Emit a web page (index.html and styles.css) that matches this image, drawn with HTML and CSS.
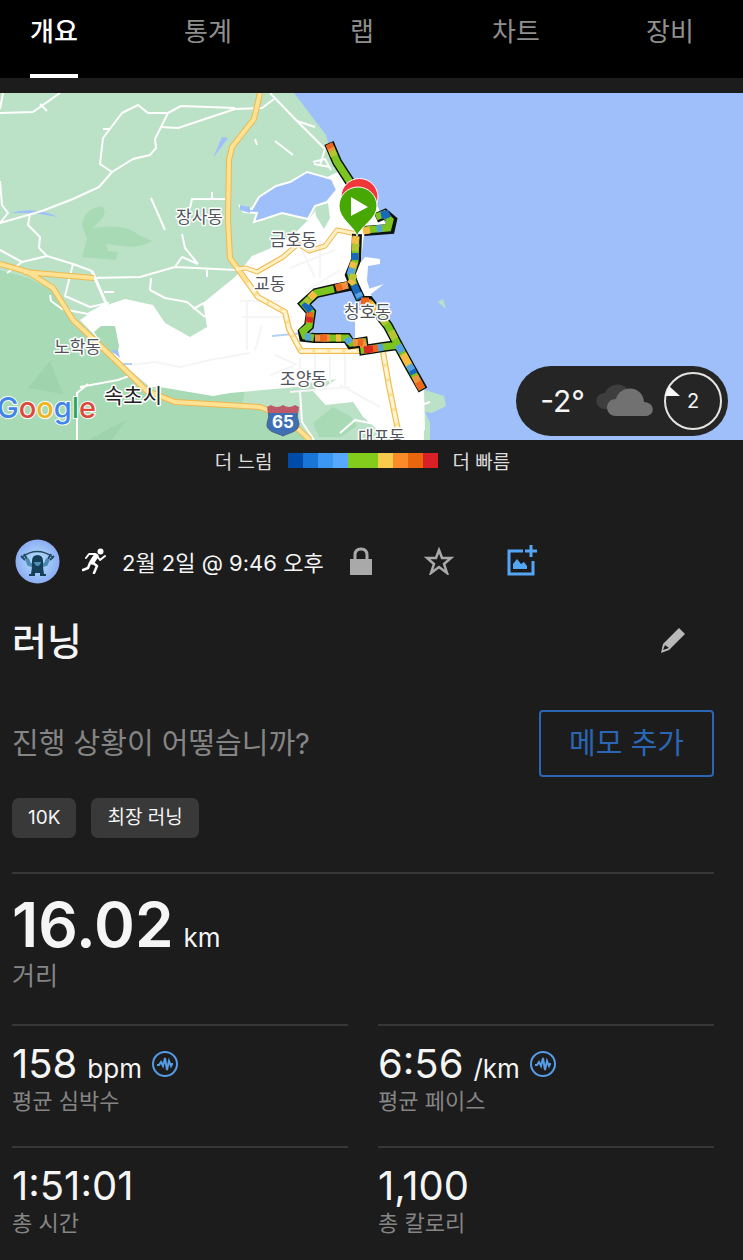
FILE: index.html
```html
<!DOCTYPE html>
<html lang="ko">
<head>
  <meta charset="UTF-8" />
  <meta name="viewport" content="width=device-width, initial-scale=1.0" />
  <title>러닝</title>
  <link rel="stylesheet" href="styles.css">
</head>
<body>
  <nav class="tabs">
    <a class="tab active" href="#overview">개요</a>
    <a class="tab" href="#stats">통계</a>
    <a class="tab" href="#laps">랩</a>
    <a class="tab" href="#charts">차트</a>
    <a class="tab" href="#gear">장비</a>
  </nav>

  <div class="map">
    <svg class="map-canvas" viewBox="0 93 743 347" role="img" aria-label="코스 지도">
      <rect y="93" width="743" height="347" fill="#9ebff9" />

      <!-- land -->
      <path fill="#bbe2c6" d="M0 93H294L307 110L326 135L329 146L352 180L377 205L388 230L364 234L361 260L372 298L382 312L402 344L425 390L444 396L446 406L432 413L425 412L430 422V440H0Z" />
      <path fill="#a8dab5" d="M0 270L28 278L53 290L73 322L110 358L150 390L175 402L230 406L280 410L312 440H0Z" />
      <path fill="#a8dab5" d="M82 225Q84 209 102 206Q108 213 100 221L92 228Q126 223 137 234L152 241Q137 249 123 246L106 244L108 251L118 252L116 260L82 257L87 239ZM160 387L213 396L245 390L235 440H175L150 398Z" />
      <path fill="#9fd3ad" d="M28 388L50 361L63 394ZM88 440L126 420L112 440Z" />
      <path fill="#fff" d="M80 320L98 308L125 299L153 305L165 323L190 337L207 327L203 303L235 277L252 256L283 243L297 225L308 220L320 205L331 195L325 178L338 172L352 181L377 205L388 230L364 234L361 260L372 298L382 312L402 344L423 389L424 440H397L381 433L363 417L353 402L330 410L312 390L337 379L297 387L230 393L213 396L160 387L150 387L132 372L110 351Z" />
      <path fill="#a8dab5" d="M94 332L101 326H115L119 346L117 355L106 350Z" />
      <path fill="#bbe2c6" d="M254 221L268 217L282 222L297 220L308 220L295 233L283 237L268 238ZM315 207L328 203L330 218L324 229L316 216ZM297 384L335 380L325 387L306 387ZM302 393L325 405L353 402L363 417L381 433L386 440H304Z" />
      <path fill="#a8dab5" d="M313 423L333 407L350 416L357 426L341 437H319Z" />

      <!-- lakes and harbour -->
      <path fill="#9ebff9" stroke="#fff" stroke-width="2" d="M240 206L252 209L259 197L276 186L290 182L307 172L332 179L337 190L327 202L315 206L308 219L299 217L282 213L264 219L254 222L257 213L244 212Z" />
      <path fill="#9ebff9" d="M350 284L329 285L312 294L304 304L315 319L311 333L340 334L355 338V310L366 310L355 290ZM222 137L228 138L213 158ZM10 213Q35 206 58 217L40 214L25 213ZM240 205L250 207V213L240 210ZM111 350L118 350L120 358Z" />
      <path fill="#fff" d="M362 261L365 257L380 259V264L368 266L367 280L362 283ZM362 291L384 284L376 290L366 298Z" />
      <path fill="#bbe2c6" d="M438 302L443 299L446 309ZM388 232L395 247L391 239Z" />

      <!-- faint street grid -->
      <g fill="none" stroke="#f5f5f5" stroke-width="2">
        <path d="M130 365L155 362L180 367L210 360L250 353M240 301H280M242 317H292M247 301V350M262 325L255 351M275 355L297 365M270 375L294 366M300 358V380M315 352V378M330 356V383M345 353V388M290 392L350 387M300 246L315 278M290 268L335 250M305 292L340 270M320 240V278M340 385L380 407" />
      </g>

      <!-- small roads -->
      <g fill="none" stroke="#fff" stroke-width="2" stroke-linejoin="round">
        <path d="M0 113L33 112L60 93M40 104L47 111M0 223L42 211L73 199L99 187L112 172L133 159L150 155L156 148L155 139L161 127L168 113L181 106L235 108" />
        <path d="M112 172L100 164L103 138L122 113L138 105L148 113H168M161 127L178 128L235 109L262 108L274 99M103 129H110" />
        <path d="M0 181L2 205L8 213L0 223M30 214L28 225L40 237L39 248L47 256L22 262L7 273M0 250L22 262M47 256L73 264L92 271M73 264L65 296L90 307L108 303L88 314L62 309L51 301L50 295M104 292H114M92 278L140 277L175 267L236 270M151 278L150 290L165 298L187 302L205 317M193 309L204 303M175 267L182 257L198 264M182 234L185 248L198 264M151 198L165 230M190 208L192 199H225M212 192V199M207 270V277" />
        <path d="M92 271L108 308" stroke-width="3" />
        <path d="M270 93L297 121L325 149M297 121L315 127M275 141L293 155M255 139L257 145M0 109L3 93M313 162L325 159L331 170M314 164L330 167M325 149L320 165M80 387L118 380L129 376M88 384L77 393V440M248 265L258 256L265 261M300 391L302 422L314 440M423 390L424 430M410 409L430 402M340 433L355 420L375 424M412 435L424 420" />
        <path d="M132 364H117M272 336L304 333" stroke="#b4d2f5" />
      </g>

      <!-- main roads -->
      <g fill="none" stroke="#efb84d" stroke-width="6" stroke-linejoin="round">
        <path d="M260 93L254 119L232 147L229 160L228 220L230 258L248 283L258 297L285 312L289 329L301 351H360M383 352L389 386L400 440" />
        <path d="M0 264L28 272L53 288L73 320L110 355L147 391L175 402L260 407L285 417L310 440M24 272L94 278" />
        <path d="M236 269L246 268L257 272L283 257L298 244L309 251L325 246L337 230L357 234" stroke-width="5" />
      </g>
      <g fill="none" stroke="#fde293" stroke-width="4" stroke-linejoin="round">
        <path d="M260 93L254 119L232 147L229 160L228 220L230 258L248 283L258 297L285 312L289 329L301 351H360M383 352L389 386L400 440" />
        <path d="M0 264L28 272L53 288L73 320L110 355L147 391L175 402L260 407L285 417L310 440M24 272L94 278" />
        <path d="M236 269L246 268L257 272L283 257L298 244L309 251L325 246L337 230L357 234" stroke-width="3" stroke="#fff0c4" />
      </g>
      <path fill="none" stroke="#fff5d6" stroke-width="3" stroke-dasharray="12 3" d="M248 283L258 297L285 312L289 329L301 351H360M383 352L389 386L400 440" />

      <!-- route outline -->
      <g fill="none" stroke="#0c1310" stroke-width="10">
        <path d="M329 143L337 162L350 182M357 234L356 260L350 275L354 285L361 300M354 285L334 289L316 293L304 304L311 312L309 326L303 332L304 337L314 338L347 338L351 344L363 342L364 350L383 347L398 345M361 301H369L378 313L388 326L398 345L410 367L423 390M364 231L390 229L392 220L385 214L376 218" />
      </g>
      <!-- route, coloured by pace -->
      <g fill="none" stroke-width="7">
        <path stroke="#7cc520" d="M331 148L337 162L350 182M365 230L388 228L390 220L384 214L376 217M356 237L355 262L351 275L354 285M334 289L316 293L304 304L311 312L309 326L303 331L305 336L314 338M323 338H347L351 343L363 342L364 350L383 347L399 345M378 313L388 326L398 345L410 367L422 389M369 302L378 313" />
        <path stroke="#ee9440" d="M329 144L332 151M348 285L336 288M315 338H330M353 343L362 342L364 347M365 302L371 303M415 376L420 386" />
        <path stroke="#ee661c" d="M329 144L331 148M310 312L309 323M342 286L336 288M320 338H327M358 342L363 343M361 301H369M364 350L378 348M418 382L422 389" />
        <path stroke="#f5bd45" d="M356 236L355 244M354 262L352 268M315 293L310 298M336 338L341 338M370 303L376 311M403 354L409 365M370 230L363 231M353 280L350 284" />
        <path stroke="#1869bc" d="M355 253L355 260M354 285L360 299M304 303L311 311M381 215L386 214L388 218M411 368L414 374" />
        <path stroke="#57a4e4" d="M352 268L350 275M347 338L350 343M378 348L383 347M382 228L377 229M398 345L402 352M409 365L412 370M305 337H311M358 293L360 297" />
        <path stroke="#d82822" d="M364 350L373 349M310 317L309 322" />
        <path stroke="#b5c632" d="M356 244L355 251M354 274L352 280M309 299L306 303M383 320L386 324M391 331L395 339M332 151L334 156" />
      </g>

      <!-- finish and start pins -->
      <path fill="#f0363b" stroke="#fff" stroke-width="1" d="M360 225C350 212 341 207 341 197A18 18 0 0 1 378 197C378 207 370 213 360 225Z" />
      <path fill="#48a803" stroke="#fff" stroke-width="1" d="M357 236C354 226 339 219 339 206A19 19 0 0 1 377 206C377 219 361 226 357 236Z" />
      <path fill="#fff" d="M351 197V216L368 207Z" />

      <!-- place names -->
      <g class="place">
        <text x="176" y="223">장사동</text>
        <text x="270" y="246">금호동</text>
        <text x="254" y="290">교동</text>
        <text x="344" y="318">청호동</text>
        <text x="54" y="353">노학동</text>
        <text x="280" y="385">조양동</text>
        <text x="358" y="443">대포동</text>
        <text class="city" x="104" y="403">속초시</text>
      </g>

      <!-- highway shield -->
      <path fill="#3d6fb4" stroke="#536084" d="M268 409H298Q296 416 299 424C299 432 288 433 283 436C278 433 266 432 267 424Q270 416 268 409Z" />
      <path fill="#bd5968" d="M268 411L267 407L271 405Q277 409 283 405Q289 409 295 405L299 407L298 413H268Z" />
      <text class="shield" x="283" y="428">65</text>

      <text class="google" x="-3" y="418"><tspan fill="#4285e8">G</tspan><tspan fill="#dc4a3d">o</tspan><tspan fill="#edb51d">o</tspan><tspan fill="#4285e8">g</tspan><tspan fill="#35a457">l</tspan><tspan fill="#dc4a3d">e</tspan></text>
    </svg>

    <div class="weather">
      <span class="temp">-2°</span>
      <svg width="57" height="34" viewBox="0 0 57 34">
        <path fill="#3e3e3e" d="M9 25C-3 24-2 9 9 9C14-3 32-2 34 11L20 25Z" />
        <path fill="#717171" d="M20 32C8 32 8 15 20 15C24 0 47 1 48 18C59 18 60 32 49 32Z" />
      </svg>
      <div class="wind">
        <svg class="wind-ring" viewBox="0 0 58 58">
          <circle cx="29" cy="29" r="28" fill="none" stroke="#e4e4e0" stroke-width="2" />
          <path fill="#f7f7f7" d="M5 14L16 24L1 24Z" />
        </svg>
        <span>2</span>
      </div>
    </div>
  </div>

  <div class="legend">
    <span>더 느림</span>
    <div class="scale">
      <i class="s1"></i><i class="s2"></i><i class="s3"></i><i class="s4"></i><i class="s5"></i>
      <i class="s5"></i><i class="s6"></i><i class="s7"></i><i class="s8"></i><i class="s9"></i>
    </div>
    <span>더 빠름</span>
  </div>

  <main class="content">
    <div class="meta">
      <svg class="avatar" viewBox="0 0 45 45" role="img" aria-label="프로필">
        <defs>
          <radialGradient id="glow">
            <stop offset="0" stop-color="#b6e3ff" />
            <stop offset="1" stop-color="#8cadf3" />
          </radialGradient>
        </defs>
        <circle cx="22.500" cy="22.500" r="22" fill="url(#glow)" />
        <path d="M7 18Q22 7 38 18" fill="none" stroke="#28495e" stroke-width="1.500" />
        <path d="M6 17L10 21M9 15L12 20M36 15L33 20M39 17L35 21" stroke="#204c69" stroke-width="2" />
        <path d="M12 20L14 25L19 27M33 20L31 25L26 27" fill="none" stroke="#4b8bb1" stroke-width="4" />
        <path d="M17 22Q17 16 22.500 16Q28 16 28 22V28L29 35H31V37H25V34H20V37H14V35H16L17 28Z" fill="#173f59" />
        <path d="M19 23H26Q25 27 22.500 27Q20 27 19 23" fill="#4e93b5" />
      </svg>
      <svg class="runner" width="24" height="26" viewBox="0 0 24 26">
        <circle cx="18.500" cy="3.500" r="3" fill="#fff" />
        <path d="M14 8L10 14" stroke="#fff" stroke-width="5" stroke-linecap="round" />
        <path d="M13 6L7 6L4 10M15 8L18 12L23 8" fill="none" stroke="#fff" stroke-width="2" stroke-linecap="round" stroke-linejoin="round" />
        <path d="M10 14L15 18L12 25M8 15L6 20L1 22" fill="none" stroke="#fff" stroke-width="2.500" stroke-linecap="round" stroke-linejoin="round" />
      </svg>
      <span class="date">2월 2일 @ 9:46 오후</span>
      <div class="actions">
        <button class="icon-btn" aria-label="공개 설정">
          <svg width="22" height="28" viewBox="0 0 22 28">
            <path fill="#a9a9a9" d="M0 12H22V28H0Z" />
            <path fill="none" stroke="#a9a9a9" stroke-width="3" d="M5 13V8Q5 2 11 2Q17 2 17 8V13" />
          </svg>
        </button>
        <button class="icon-btn" aria-label="즐겨찾기">
          <svg width="30" height="28" viewBox="0 0 30 28">
            <path fill="none" stroke="#a9a9a9" stroke-width="2.500" d="M15 3L18 11L27 11L20 17L23 26L15 20L7 26L10 17L3 11L12 11Z" />
          </svg>
        </button>
        <button class="icon-btn" aria-label="사진 추가">
          <svg width="32" height="32" viewBox="0 0 32 32">
            <path fill="none" stroke="#55a5f5" stroke-width="3" d="M17 6H3V29H27V16M25 0V12M19 6H31" />
            <path fill="#55a5f5" d="M7 24V19L11 14L15 19L18 17L21 21V24Z" />
          </svg>
        </button>
      </div>
    </div>

    <div class="title-row">
      <h1>러닝</h1>
      <button class="icon-btn" aria-label="이름 편집">
        <svg width="26" height="26" viewBox="0 0 26 26">
          <path fill="#b9b9b9" d="M19 0L25 6L9 22L1 25L3 16Z" />
          <path fill="#1c1c1c" d="M5 17L9 20L3 22Z" />
        </svg>
      </button>
    </div>

    <div class="note-row">
      <p>진행 상황이 어떻습니까?</p>
      <button class="note-btn">메모 추가</button>
    </div>

    <div class="tags">
      <span class="tag">10K</span>
      <span class="tag">최장 러닝</span>
    </div>

    <section class="distance">
      <div class="value big">16.02 <small>km</small></div>
      <div class="label">거리</div>
    </section>

    <section class="stats">
      <div class="stat">
        <div class="value">158 <small>bpm</small>
          <svg class="pulse" viewBox="0 0 26 26">
            <circle cx="13" cy="13" r="12" />
            <path d="M5 14H7L9 11L11 15L13 7L15 19L17 10L19 15L20 13H21" />
          </svg>
        </div>
        <div class="label">평균 심박수</div>
      </div>
      <div class="stat">
        <div class="value">6:56 <small>/km</small>
          <svg class="pulse" viewBox="0 0 26 26">
            <circle cx="13" cy="13" r="12" />
            <path d="M5 14H7L9 11L11 15L13 7L15 19L17 10L19 15L20 13H21" />
          </svg>
        </div>
        <div class="label">평균 페이스</div>
      </div>
      <div class="stat">
        <div class="value">1:51:01</div>
        <div class="label">총 시간</div>
      </div>
      <div class="stat">
        <div class="value">1,100</div>
        <div class="label">총 칼로리</div>
      </div>
    </section>
  </main>
</body>
</html>
```

FILE: styles.css
```css
* {
  box-sizing: border-box;
}
body {
  margin: 0;
  background: #1c1c1c;
  color: #f5f5f5;
  font-family: Inter, "Noto Sans CJK KR", sans-serif;
}
button {
  font-family: inherit;
  background: none;
  border: none;
  padding: 0;
  cursor: pointer;
}
svg {
  display: block;
}

/* tabs */
.tabs {
  display: flex;
  justify-content: space-between;
  padding: 0 49px 0 30px;
  background: #000;
}
.tab {
  min-width: 48px;
  height: 78px;
  border-bottom: 4px solid transparent;
  color: #8f8f8f;
  font-size: 26px;
  line-height: 64px;
  text-align: center;
  text-decoration: none;
}
.tab.active {
  color: #fff;
  font-weight: 500;
  border-color: #fff;
}

/* map */
.map {
  position: relative;
  margin-top: 15px;
}
.map-canvas {
  width: 100%;
  height: auto;
}
.place {
  font-size: 17px;
  fill: #50545a;
  stroke: #fff;
  stroke-width: 3px;
  stroke-linejoin: round;
  paint-order: stroke;
}
.city {
  font-size: 21px;
  fill: #222;
}
.shield {
  font-size: 17px;
  font-weight: 700;
  fill: #fff;
  text-anchor: middle;
}
.google {
  font-size: 29px;
  font-weight: 500;
  stroke: #fff;
  stroke-width: 2px;
  paint-order: stroke;
}
.weather {
  position: absolute;
  right: 15px;
  bottom: 4px;
  display: flex;
  align-items: center;
  height: 70px;
  padding: 0 6px 0 24px;
  gap: 11px;
  border-radius: 35px;
  background: #252525;
}
.temp {
  font-size: 30px;
}
.wind {
  position: relative;
  width: 58px;
  line-height: 58px;
  text-align: center;
  font-size: 20px;
}
.wind-ring {
  position: absolute;
  inset: 0;
}

/* pace legend */
.legend {
  display: flex;
  align-items: center;
  justify-content: center;
  gap: 15px;
  height: 42px;
  padding: 0 18px 2px 0;
  font-size: 19px;
  color: #dedede;
}
.scale {
  display: flex;
}
.scale i {
  width: 15px;
  height: 15px;
}
.s1 { background: #004ba8; }
.s2 { background: #1976d8; }
.s3 { background: #3c97f3; }
.s4 { background: #56a9ff; }
.s5 { background: #83cc1c; }
.s6 { background: #f9cb4d; }
.s7 { background: #fb8a29; }
.s8 { background: #e9660f; }
.s9 { background: #d92027; }

/* activity */
.content {
  padding: 56px 29px 0 12px;
}
.meta {
  display: flex;
  align-items: center;
  height: 46px;
  padding-left: 3px;
}
.avatar {
  width: 45px;
  height: 45px;
}
.runner {
  margin: 0 16px 0 22px;
}
.date {
  font-size: 22px;
}
.actions {
  display: flex;
  align-items: center;
  gap: 52px;
  margin-left: 26px;
}
.title-row {
  display: flex;
  align-items: center;
  justify-content: space-between;
  margin-top: 29px;
  padding-right: 28px;
}
h1 {
  margin: 0;
  font-size: 38px;
  font-weight: 500;
  line-height: 56px;
}
.note-row {
  display: flex;
  align-items: center;
  justify-content: space-between;
  margin-top: 41px;
}
.note-row p {
  margin: 0;
  padding-bottom: 5px;
  font-size: 29px;
  color: #858585;
}
.note-btn {
  height: 67px;
  padding: 0 28px 5px;
  border: 2px solid #2a66b3;
  border-radius: 4px;
  color: #2a66b3;
  font-size: 29px;
}
.tags {
  display: flex;
  gap: 15px;
  margin-top: 21px;
}
.tag {
  padding: 0 16px;
  border-radius: 7px;
  background: #393939;
  font-size: 19px;
  line-height: 40px;
}

/* numbers */
.distance {
  margin-top: 34px;
  padding: 19px 0 29px;
  border-top: 2px solid #373737;
}
.value {
  display: flex;
  align-items: baseline;
  gap: 10px;
  font-size: 40px;
  line-height: 44px;
}
.value small {
  font-size: 26px;
  line-height: 26px;
}
.value.big {
  font-size: 62px;
  font-weight: 600;
  line-height: 64px;
}
.big small {
  font-weight: 400;
}
.label {
  color: #858585;
  font-size: 22px;
  line-height: 30px;
}
.distance .label {
  font-size: 25px;
  line-height: 38px;
}
.stats {
  display: grid;
  grid-template-columns: 1fr 1fr;
  gap: 30px;
}
.stat {
  padding-top: 16px;
  border-top: 2px solid #373737;
}
.pulse {
  align-self: center;
  width: 26px;
  height: 26px;
  fill: none;
  stroke: #559be6;
  stroke-width: 2px;
}
```
